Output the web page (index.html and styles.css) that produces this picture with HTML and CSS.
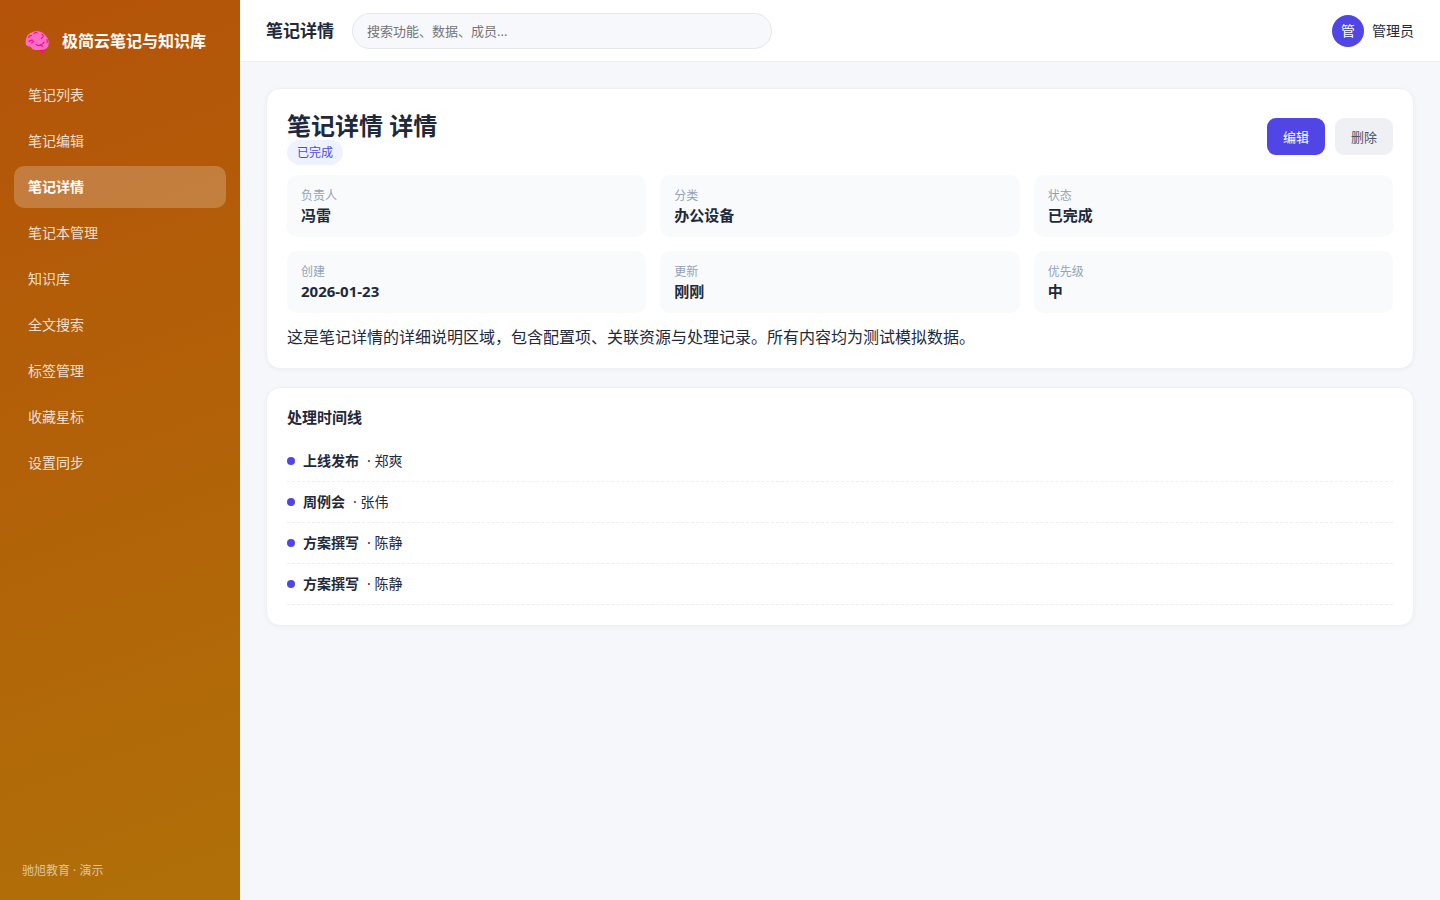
FILE: index.html
```html
<!DOCTYPE html>
<html lang="zh-CN">
<head>
  <meta charset="UTF-8">
  <meta name="viewport" content="width=device-width, initial-scale=1.0">
  <title>极简云笔记与知识库</title>
  <link rel="stylesheet" href="styles.css">
</head>

<body>
  <aside class="sidebar">
    <div class="brand">
      <svg class="brand-icon" viewBox="0 0 24 24" aria-hidden="true">
        <path fill="#f70a8d" d="M14 19.500h5l-1 4.500h-2z"/>
        <path fill="#ff6dc6" d="M.7 14.500C.3 10.500 1.500 6.500 4.500 4.500 7.500 2.500 10 2 13 2.200c3.500.3 6 2 7.500 4.300C22.500 8.500 23.800 11 23.700 14c0 2.500-.8 4.300-2.200 5.300-1.500 1.200-3.500 1.700-5.500 1.700H11c-2.500 0-4.500-1-5.500-3.500-1.500.3-4.500-.5-4.800-3z"/>
        <g fill="none" stroke="#f70a8d" stroke-width="1.100" stroke-linecap="round">
          <path d="M3.500 8.500C4 7 5.200 6.300 6.700 6.500"/>
          <path d="M9 4.700c1-1.200 2-1.400 3-1"/>
          <path d="M17 5.500c1.200.5 1.600 1.500 1 2.500l-1.700 1.500"/>
          <path d="M4 12.500c1-1 2-1.500 4-1.300"/>
          <path d="M8.500 12.500L6.500 14"/>
          <path d="M11 15.500c1.500 1.200 3.500 1.200 5 .2 1.500-.2 2.500-1 3-2.700"/>
          <path d="M15.500 16c.5 1 1.300 1.300 2.300 1"/>
          <path d="M22 10.500c.5 1.200.5 2.200 0 3"/>
        </g>
      </svg>
      <span>极简云笔记与知识库</span>
    </div>
    <nav class="menu">
      <a href="#">笔记列表</a>
      <a href="#">笔记编辑</a>
      <a href="#" class="active">笔记详情</a>
      <a href="#">笔记本管理</a>
      <a href="#">知识库</a>
      <a href="#">全文搜索</a>
      <a href="#">标签管理</a>
      <a href="#">收藏星标</a>
      <a href="#">设置同步</a>
    </nav>
    <div class="sidebar-footer">驰旭教育 · 演示</div>
  </aside>

  <div class="main">
    <header class="topbar">
      <div class="page-title">笔记详情</div>
      <input type="search" class="search" placeholder="搜索功能、数据、成员..." aria-label="搜索">
      <div class="user">
        <span class="avatar">管</span>
        <span>管理员</span>
      </div>
    </header>

    <main class="content">
      <section class="card">
        <div class="detail-head">
          <div>
            <h1>笔记详情 详情</h1>
            <div class="status"><span class="badge">已完成</span></div>
          </div>
          <div class="actions">
            <button type="button" class="btn btn-primary">编辑</button>
            <button type="button" class="btn">删除</button>
          </div>
        </div>
        <dl class="info-grid">
          <div class="info"><dt>负责人</dt><dd>冯雷</dd></div>
          <div class="info"><dt>分类</dt><dd>办公设备</dd></div>
          <div class="info"><dt>状态</dt><dd>已完成</dd></div>
          <div class="info"><dt>创建</dt><dd>2026-01-23</dd></div>
          <div class="info"><dt>更新</dt><dd>刚刚</dd></div>
          <div class="info"><dt>优先级</dt><dd>中</dd></div>
        </dl>
        <p class="description">这是笔记详情的详细说明区域，包含配置项、关联资源与处理记录。所有内容均为测试模拟数据。</p>
      </section>

      <section class="card">
        <h2>处理时间线</h2>
        <ul class="timeline">
          <li><strong>上线发布</strong><span>· 郑爽</span></li>
          <li><strong>周例会</strong><span>· 张伟</span></li>
          <li><strong>方案撰写</strong><span>· 陈静</span></li>
          <li><strong>方案撰写</strong><span>· 陈静</span></li>
        </ul>
      </section>
    </main>
  </div>
</body>
</html>
```
FILE: styles.css
```css
* {
  box-sizing: border-box;
}

body {
  display: flex;
  min-height: 100vh;
  margin: 0;
  font-family: "Noto Sans", "Noto Sans CJK SC", sans-serif;
  font-size: 14px;
  line-height: 20px;
  color: #1e293b;
  background: #f5f7fb;
}

h1, h2, p, ul, dl, dd {
  margin: 0;
  padding: 0;
}

/* sidebar */
.sidebar {
  display: flex;
  flex-direction: column;
  flex-shrink: 0;
  width: 240px;
  padding: 20px 14px;
  color: #fff;
  background: linear-gradient(160deg, #b45309, #b07008);
}

.brand {
  display: flex;
  align-items: center;
  gap: 13px;
  height: 42px;
  margin-bottom: 12px;
  padding: 0 11px;
  font-size: 16px;
  font-weight: 700;
  white-space: nowrap;
}

.brand-icon {
  width: 24px;
  height: 24px;
}

.menu {
  display: flex;
  flex-direction: column;
  gap: 4px;
}

.menu a {
  padding: 11px 14px;
  border-radius: 10px;
  color: rgba(255, 255, 255, 0.82);
  text-decoration: none;
}

.menu a:hover {
  background: rgba(255, 255, 255, 0.1);
}

.menu a.active {
  color: #fff;
  font-weight: 700;
  background: rgba(255, 255, 255, 0.22);
}

.sidebar-footer {
  margin-top: auto;
  padding: 0 8px;
  font-size: 12px;
  line-height: 18px;
  color: rgba(255, 255, 255, 0.6);
}

/* top bar */
.main {
  flex: 1;
  min-width: 0;
}

.topbar {
  display: flex;
  align-items: center;
  gap: 18px;
  height: 62px;
  padding: 0 26px;
  background: #fff;
  border-bottom: 1px solid #eceef3;
}

.page-title {
  font-size: 17px;
  font-weight: 700;
}

.search {
  width: 420px;
  height: 36px;
  padding: 0 14px;
  border: 1px solid #e5e7f0;
  border-radius: 18px;
  outline: none;
  font-family: inherit;
  font-size: 13px;
  background: #f7f8fc;
}

.search::placeholder {
  color: #757575;
}

.user {
  display: flex;
  align-items: center;
  gap: 8px;
  margin-left: auto;
}

.avatar {
  display: flex;
  align-items: center;
  justify-content: center;
  width: 32px;
  height: 32px;
  border-radius: 50%;
  color: #fff;
  background: #4f46e5;
}

/* cards */
.content {
  display: flex;
  flex-direction: column;
  gap: 18px;
  padding: 26px;
}

.card {
  padding: 20px;
  border: 1px solid #eef0f4;
  border-radius: 14px;
  background: #fff;
  box-shadow: 0 1px 4px rgba(15, 23, 42, 0.04);
}

.detail-head {
  display: flex;
  align-items: center;
  justify-content: space-between;
  margin-bottom: 12px;
}

h1 {
  font-size: 24px;
  line-height: 33px;
}

.status {
  font-size: 12px;
  line-height: 21px;
}

.badge {
  padding: 4px 10px;
  border-radius: 999px;
  color: #4f46e5;
  background: #eef2ff;
}

.actions {
  display: flex;
  gap: 10px;
}

.btn {
  height: 37px;
  padding: 0 16px;
  border: none;
  border-radius: 9px;
  font-family: inherit;
  font-size: 13px;
  color: #475569;
  background: #eef0f4;
  cursor: pointer;
}

.btn-primary {
  color: #fff;
  background: #4f46e5;
}

.info-grid {
  display: grid;
  grid-template-columns: repeat(3, 1fr);
  gap: 14px;
}

.info {
  padding: 12px 14px;
  border-radius: 10px;
  background: #f9fafc;
}

.info dt {
  font-size: 12px;
  line-height: 18px;
  color: #94a3b8;
}

.info dd {
  font-size: 15px;
  font-weight: 700;
}

.description {
  margin-top: 14px;
  font-size: 16px;
  line-height: 21px;
}

/* timeline */
h2 {
  margin-bottom: 15px;
  font-size: 15px;
  line-height: 18px;
}

.timeline {
  list-style: none;
}

.timeline li {
  display: flex;
  align-items: center;
  gap: 8px;
  padding: 10px 0;
  border-bottom: 1px dashed #eceef2;
}

.timeline li::before {
  content: "";
  width: 8px;
  height: 8px;
  border-radius: 50%;
  background: #4f46e5;
}
```
